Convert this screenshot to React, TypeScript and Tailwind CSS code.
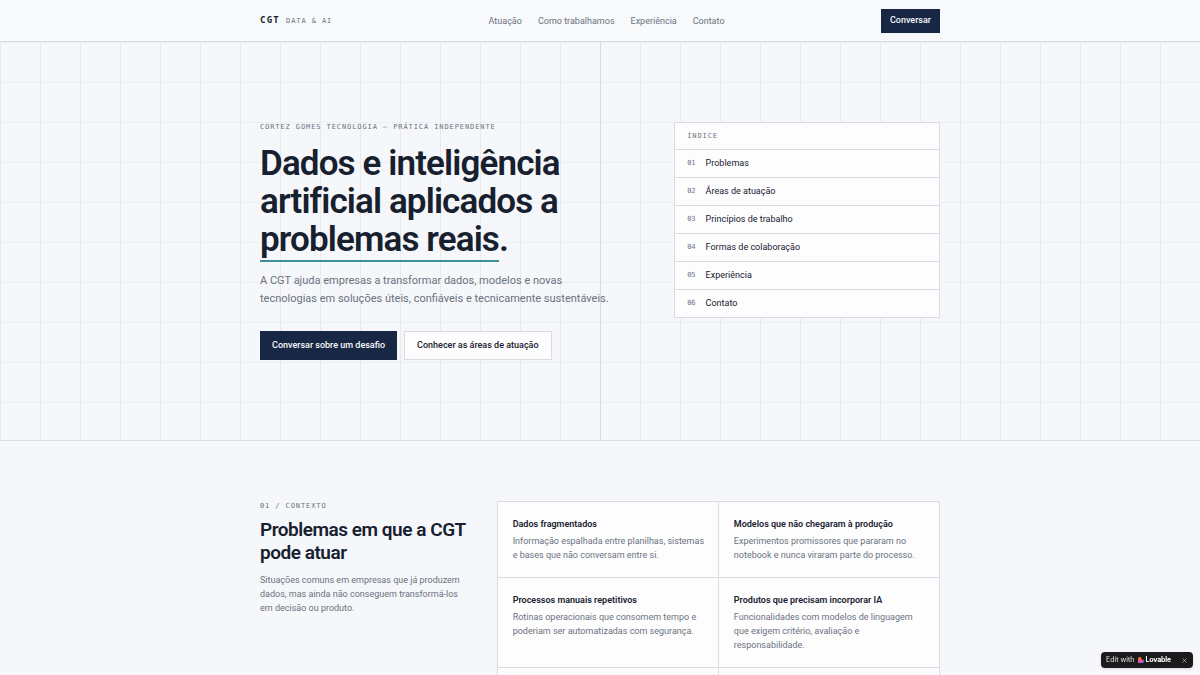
import type { ReactNode } from "react";
import { X } from "lucide-react";

const navLinks = [
  { label: "Atuação", href: "#atuacao" },
  { label: "Como trabalhamos", href: "#trabalho" },
  { label: "Experiência", href: "#experiencia" },
  { label: "Contato", href: "#contato" },
];

const indexItems = [
  { label: "Problemas", href: "#problemas" },
  { label: "Áreas de atuação", href: "#atuacao" },
  { label: "Princípios de trabalho", href: "#trabalho" },
  { label: "Formas de colaboração", href: "#colaboracao" },
  { label: "Experiência", href: "#experiencia" },
  { label: "Contato", href: "#contato" },
];

const problems = [
  {
    title: "Dados fragmentados",
    lines: ["Informação espalhada entre planilhas, sistemas", "e bases que não conversam entre si."],
  },
  {
    title: "Modelos que não chegaram à produção",
    lines: ["Experimentos promissores que pararam no", "notebook e nunca viraram parte do processo."],
  },
  {
    title: "Processos manuais repetitivos",
    lines: ["Rotinas operacionais que consomem tempo e", "poderiam ser automatizadas com segurança."],
  },
  {
    title: "Produtos que precisam incorporar IA",
    lines: ["Funcionalidades com modelos de linguagem", "que exigem critério, avaliação e", "responsabilidade."],
  },
];

function Eyebrow({ children }: { children: ReactNode }) {
  return (
    <p className="font-['DejaVu_Sans_Mono',monospace] text-[7px] leading-[10px] tracking-[0.13em] text-[#6b7280] uppercase">
      {children}
    </p>
  );
}

function Header() {
  return (
    <header className="border-b border-[#d9dde3] bg-[#f8f9fb]">
      <div className="mx-auto flex h-[41px] max-w-[680px] items-center justify-between">
        <a href="#" className="flex items-baseline gap-1.5 font-['DejaVu_Sans_Mono',monospace]">
          <span className="text-[9px] font-bold tracking-[0.14em] text-[#17202e]">CGT</span>
          <span className="text-[7px] tracking-[0.13em] text-[#6b7280]">DATA &amp; AI</span>
        </a>
        <nav className="flex items-center gap-4">
          {navLinks.map((link) => (
            <a key={link.href} href={link.href} className="text-[9px] leading-[14px] text-[#6b7280]">
              {link.label}
            </a>
          ))}
        </nav>
        <button type="button" className="h-6 bg-[#172744] px-[9px] text-[9px] font-medium text-[#f8f9fb]">
          Conversar
        </button>
      </div>
    </header>
  );
}

function Hero() {
  return (
    <section className="relative border-b border-[#d9dde3] bg-[linear-gradient(to_right,#e8eaee_1px,transparent_1px),linear-gradient(to_bottom,#eceef1_1px,transparent_1px)] bg-size-[40px_40px]">
      <div className="absolute inset-y-0 left-1/2 w-px bg-[#d9dde3]" />
      <div className="relative mx-auto grid max-w-[680px] grid-cols-12 items-start gap-[30px] py-20">
        <div className="col-span-7">
          <Eyebrow>Cortez Gomes Tecnologia — Prática independente</Eyebrow>
          <h1 className="mt-[13px] text-[35px] leading-[38px] font-semibold tracking-tight text-[#17202e]">
            Dados e inteligência
            <br />
            artificial aplicados a
            <br />
            <span className="border-b-2 border-[#3f8f98]">problemas reais</span>.
          </h1>
          <p className="mt-[13px] text-[11px] leading-[18px] text-[#6b7280]">
            A CGT ajuda empresas a transformar dados, modelos e novas
            <br />
            tecnologias em soluções úteis, confiáveis e tecnicamente sustentáveis.
          </p>
          <div className="mt-[23px] flex gap-[7px]">
            <button type="button" className="h-[29px] bg-[#172744] px-3 text-[9px] font-medium text-[#f8f9fb]">
              Conversar sobre um desafio
            </button>
            <button
              type="button"
              className="h-[29px] border border-[#d9dde3] bg-[#fdfdfe] px-3 text-[9px] font-medium text-[#17202e]"
            >
              Conhecer as áreas de atuação
            </button>
          </div>
        </div>

        <aside className="col-span-5 border border-[#d9dde3] bg-[#fdfdfe]">
          <div className="px-3 py-2">
            <Eyebrow>Índice</Eyebrow>
          </div>
          <ol>
            {indexItems.map((item, index) => (
              <li key={item.label} className="border-t border-[#d9dde3]">
                <a href={item.href} className="flex h-[27px] items-center gap-2.5 px-3">
                  <span className="font-['DejaVu_Sans_Mono',monospace] text-[7px] text-[#6b7280]">
                    {String(index + 1).padStart(2, "0")}
                  </span>
                  <span className="text-[9px] text-[#17202e]">{item.label}</span>
                </a>
              </li>
            ))}
          </ol>
        </aside>
      </div>
    </section>
  );
}

function Problems() {
  return (
    <section id="problemas">
      <div className="mx-auto grid max-w-[680px] grid-cols-12 items-start gap-[30px] py-[60px]">
        <div className="col-span-4">
          <Eyebrow>01 / Contexto</Eyebrow>
          <h2 className="mt-[7px] text-[19px] leading-[23px] font-semibold tracking-tight text-[#17202e]">
            Problemas em que a CGT
            <br />
            pode atuar
          </h2>
          <p className="mt-[9px] text-[9px] leading-[14px] text-[#6b7280]">
            Situações comuns em empresas que já produzem
            <br />
            dados, mas ainda não conseguem transformá-los
            <br />
            em decisão ou produto.
          </p>
        </div>

        <div className="col-span-8 grid grid-cols-2 gap-px border border-[#d9dde3] bg-[#d9dde3]">
          {problems.map((problem) => (
            <article key={problem.title} className="bg-[#fdfdfe] p-[15px]">
              <h3 className="text-[9px] leading-[14px] font-semibold text-[#17202e]">{problem.title}</h3>
              <p className="mt-[3px] text-[9px] leading-[14px] text-[#6b7280]">
                {problem.lines.map((line) => (
                  <span key={line} className="block whitespace-nowrap">
                    {line}
                  </span>
                ))}
              </p>
            </article>
          ))}
          <div className="h-[76px] bg-[#fdfdfe]" />
          <div className="h-[76px] bg-[#fdfdfe]" />
        </div>
      </div>
    </section>
  );
}

function LovableBadge() {
  return (
    <div className="fixed right-[7px] bottom-[7px] flex h-4 items-center rounded bg-[#1b1b1b] px-[5px] font-['Inter',sans-serif] text-[7px] text-[#e5e5e5] shadow-sm">
      <a href="#lovable" className="flex items-center">
        Edit with
        <svg viewBox="0 0 24 24" className="ml-1 size-1.5" aria-hidden="true">
          <defs>
            <linearGradient id="heart" x1="0.2" y1="0" x2="0.7" y2="1">
              <stop offset="0.2" stopColor="#ff7a35" />
              <stop offset="0.55" stopColor="#ff4b8b" />
              <stop offset="1" stopColor="#7b6cff" />
            </linearGradient>
          </defs>
          <path
            d="M7 0a7 7 0 0 1 7 7v3h3a7 7 0 0 1 0 14H0V7a7 7 0 0 1 7-7z"
            fill="url(#heart)"
          />
        </svg>
        <span className="ml-px font-bold tracking-tight text-white">Lovable</span>
      </a>
      <button type="button" aria-label="Fechar" className="ml-2.5">
        <X className="size-[7px]" />
      </button>
    </div>
  );
}

export default function App() {
  return (
    <div className="min-h-screen bg-[#f5f7fa] font-['Roboto',sans-serif]">
      <Header />
      <main>
        <Hero />
        <Problems />
      </main>
      <LovableBadge />
    </div>
  );
}
